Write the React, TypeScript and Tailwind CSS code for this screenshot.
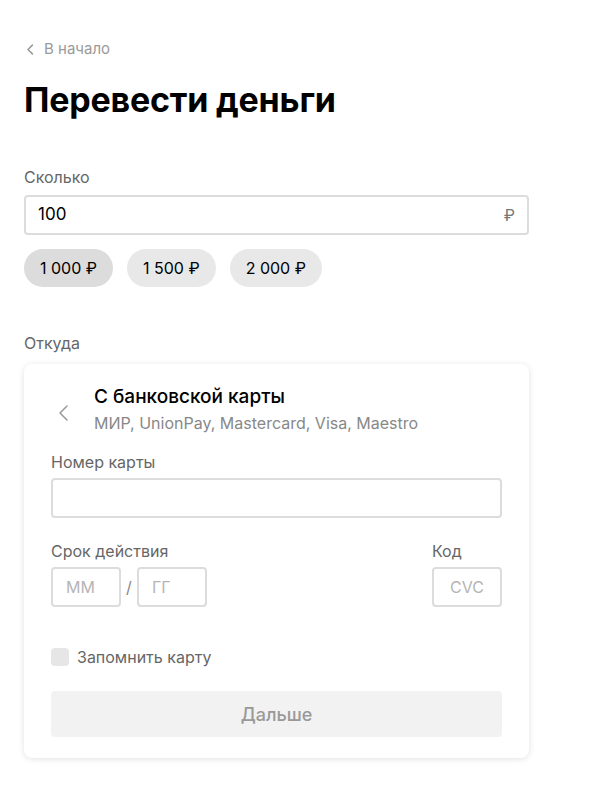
function ChevronLeft({ className, width = 2 }: { className?: string; width?: number }) {
  return (
    <svg className={className} viewBox="0 0 24 24" fill="none" stroke="currentColor" strokeWidth={width} strokeLinecap="round" strokeLinejoin="round">
      <path d="M15 5l-7 7 7 7" />
    </svg>
  );
}

const chips = [
  { label: "1 000 ₽", active: true },
  { label: "1 500 ₽", active: false },
  { label: "2 000 ₽", active: false },
];

export default function App() {
  return (
    <div className="min-h-screen bg-white px-6 pt-[38px] text-black" style={{ fontFamily: "Inter, 'Noto Sans', sans-serif" }}>
      <a className="flex items-center gap-[6px] text-[15px] text-[#9a9a9a] h-[22px]">
        <ChevronLeft className="w-[15px] h-[15px] -ml-[1px]" width={2.5} />
        <span>В начало</span>
      </a>

      <h1 className="mt-[20px] text-[34px] font-bold leading-[40px] tracking-[-0.2px]">Перевести деньги</h1>

      <div className="mt-[47px] text-[16px] text-[#666] leading-[20px]">Сколько</div>
      <div className="mt-[8px] w-[505px] h-[40px] border-2 border-[#dcdcdc] rounded-[4px] flex items-center justify-between pl-[12px] pr-[12px]">
        <span className="text-[17px]">100</span>
        <span className="text-[16px] text-[#777]">₽</span>
      </div>

      <div className="mt-[14px] flex gap-[14px]">
        {chips.map((c) => (
          <button
            key={c.label}
            className={`h-[38px] px-[16px] rounded-full text-[16px] ${c.active ? "bg-[#dcdcdc]" : "bg-[#e8e8e8]"}`}
          >
            {c.label}
          </button>
        ))}
      </div>

      <div className="mt-[46px] text-[16px] text-[#666] leading-[20px]">Откуда</div>

      <div className="mt-[11px] w-[505px] rounded-[8px] bg-white shadow-[0_1px_6px_rgba(0,0,0,0.12)] px-[27px] pt-[20px] pb-[21px]">
        <div className="flex">
          <ChevronLeft className="w-[24px] h-[24px] text-[#999] mt-[17px] ml-[1px] mr-[18px]" width={1.5} />
          <div>
            <div className="text-[19px] font-medium leading-[26px]">С банковской карты</div>
            <div className="text-[16px] text-[#888] leading-[22px] mt-[2px]">МИР, UnionPay, Mastercard, Visa, Maestro</div>
          </div>
        </div>

        <div className="mt-[18px] text-[16px] text-[#666] leading-[20px]">Номер карты</div>
        <div className="mt-[6px] h-[40px] border-2 border-[#dcdcdc] rounded-[4px]" />

        <div className="mt-[23px] flex justify-between">
          <div>
            <div className="text-[16px] text-[#666] leading-[20px]">Срок действия</div>
            <div className="mt-[6px] flex items-center">
              <div className="w-[70px] h-[40px] border-2 border-[#dcdcdc] rounded-[4px] flex items-center px-[13px] text-[16px] text-[#b5b5b5]">ММ</div>
              <span className="w-[16px] text-center text-[16px] text-[#888]">/</span>
              <div className="w-[70px] h-[40px] border-2 border-[#dcdcdc] rounded-[4px] flex items-center px-[13px] text-[16px] text-[#b5b5b5]">ГГ</div>
            </div>
          </div>
          <div>
            <div className="text-[16px] text-[#666] leading-[20px]">Код</div>
            <div className="mt-[6px] w-[70px] h-[40px] border-2 border-[#dcdcdc] rounded-[4px] flex items-center justify-center text-[16px] text-[#b5b5b5]">CVC</div>
          </div>
        </div>

        <label className="mt-[40px] flex items-center gap-[8px] h-[20px]">
          <span className="w-[18px] h-[18px] rounded-[4px] bg-[#e6e6e6]" />
          <span className="text-[16px] text-[#666]">Запомнить карту</span>
        </label>

        <button className="mt-[24px] w-full h-[46px] rounded-[4px] bg-[#f2f2f2] text-[18px] font-medium text-[#999]">Дальше</button>
      </div>
    </div>
  );
}
